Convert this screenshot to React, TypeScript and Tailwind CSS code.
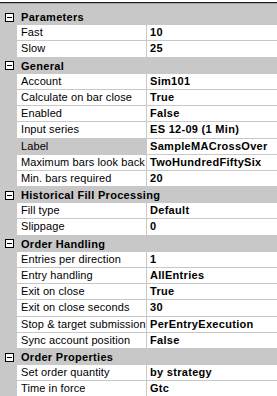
type Prop = { name: string; value: string; selected?: boolean }
type Category = { title: string; props: Prop[] }

const categories: Category[] = [
  {
    title: 'Parameters',
    props: [
      { name: 'Fast', value: '10' },
      { name: 'Slow', value: '25' }
    ]
  },
  {
    title: 'General',
    props: [
      { name: 'Account', value: 'Sim101' },
      { name: 'Calculate on bar close', value: 'True' },
      { name: 'Enabled', value: 'False' },
      { name: 'Input series', value: 'ES 12-09 (1 Min)' },
      { name: 'Label', value: 'SampleMACrossOver', selected: true },
      { name: 'Maximum bars look back', value: 'TwoHundredFiftySix' },
      { name: 'Min. bars required', value: '20' }
    ]
  },
  {
    title: 'Historical Fill Processing',
    props: [
      { name: 'Fill type', value: 'Default' },
      { name: 'Slippage', value: '0' }
    ]
  },
  {
    title: 'Order Handling',
    props: [
      { name: 'Entries per direction', value: '1' },
      { name: 'Entry handling', value: 'AllEntries' },
      { name: 'Exit on close', value: 'True' },
      { name: 'Exit on close seconds', value: '30' },
      { name: 'Stop & target submission', value: 'PerEntryExecution' },
      { name: 'Sync account position', value: 'False' }
    ]
  },
  {
    title: 'Order Properties',
    props: [
      { name: 'Set order quantity', value: 'by strategy' },
      { name: 'Time in force', value: 'Gtc' }
    ]
  }
]

function MinusBox() {
  return (
    <svg width="9" height="9" viewBox="0 0 9 9" className="shrink-0">
      <rect x="0.5" y="0.5" width="8" height="8" fill="white" stroke="#000" />
      <line x1="2" y1="4.5" x2="7" y2="4.5" stroke="#000" />
    </svg>
  )
}

export default function App() {
  return (
    <div
      className="w-[277px] h-[396px] overflow-hidden bg-white text-[11px] text-black"
      style={{ fontFamily: '"Liberation Sans", Arial, sans-serif' }}>
      <div className="h-[2px] bg-white" />
      <div className="h-px bg-[#202020]" />
      <div className="h-px bg-[#a0a0a0]" />
      <div className="h-[5px] bg-[#c8c8c8]" />
      {categories.map(cat => (
        <div key={cat.title}>
          <div className="flex h-[16.2px] items-center bg-[#c8c8c8]">
            <div className="ml-[5px] flex">
              <MinusBox />
            </div>
            <span className="ml-[7px] font-bold leading-[16px] tracking-[0.3px]">{cat.title}</span>
          </div>
          {cat.props.map(p => (
            <div key={p.name} className="flex h-[16.2px] gap-px bg-[#c8c8c8] pb-px">
              <div className="w-[16px] shrink-0" />
              <div
                className={
                  'w-[129px] shrink-0 overflow-hidden whitespace-nowrap pl-[4px] leading-[15px] tracking-[0.1px] ' +
                  (p.selected ? 'bg-[#c8c8c8]' : 'bg-white')
                }>
                {p.name}
              </div>
              <div className="flex-1 overflow-hidden whitespace-nowrap bg-white pl-[3px] font-bold leading-[15px] tracking-[0.3px]">
                {p.value}
              </div>
            </div>
          ))}
        </div>
      ))}
      <div className="flex h-4">
        <div className="w-[17px] bg-[#c8c8c8]" />
        <div className="flex-1 bg-white" />
      </div>
    </div>
  )
}
